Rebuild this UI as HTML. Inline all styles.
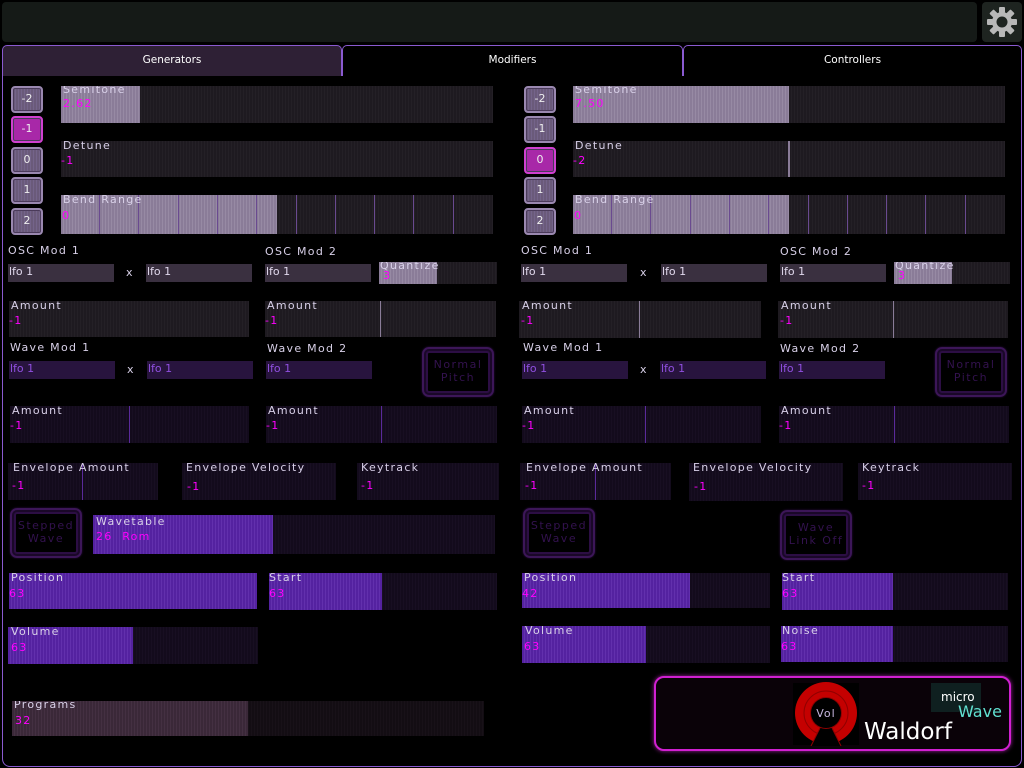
<!DOCTYPE html>
<html><head><meta charset="utf-8"><style>
*{margin:0;padding:0;box-sizing:border-box}
body{width:1024px;height:768px;background:#000;position:relative;overflow:hidden;font-family:"DejaVu Sans","Liberation Sans",sans-serif}
.a{position:absolute}
.s{position:absolute;overflow:hidden}
.s .f{position:absolute;left:0;top:0;bottom:0}
.s .l{position:absolute;left:2px;top:-2px;font-size:11px;letter-spacing:1.3px;color:#d8d0e8;white-space:nowrap}
.s .v{position:absolute;left:0;top:13px;font-size:11px;letter-spacing:1.3px;color:#f0f;white-space:nowrap}
.s .m{position:absolute;top:0;bottom:0;width:1px}
.g{background:repeating-linear-gradient(90deg,#1e1a20 0 2px,#242026 2px 3px)}
.g .f{background:repeating-linear-gradient(90deg,#8a7c98 0 2px,#978aa4 2px 3px)}
.g .m{background:#8a7c98}
.p{background:repeating-linear-gradient(90deg,#130b1c 0 2px,#180f22 2px 3px)}
.p .f{background:repeating-linear-gradient(90deg,#5422a0 0 2px,#6230ad 2px 3px)}
.p .m{background:#5a2a9a}
.r{background:repeating-linear-gradient(90deg,#130d13 0 2px,#181118 2px 3px)}
.r .f{background:repeating-linear-gradient(90deg,#3a2838 0 2px,#443042 2px 3px)}
.lab{position:absolute;font-size:11px;letter-spacing:1.3px;color:#d8d0e8;white-space:nowrap}
.cb{position:absolute;height:18px;background:#3a3040;color:#e0d8ec;font-size:11px;padding-left:1px;line-height:15px}
.cp{position:absolute;height:18px;background:#28143e;color:#9050e0;font-size:11px;padding-left:1px;line-height:15px}
.x{position:absolute;font-size:11px;color:#d8d0e8}
.b{position:absolute;width:32px;height:27px;border:2px solid #9a88b0;border-radius:4px;background:repeating-linear-gradient(90deg,#6a5a7a 0 2px,#74648a 2px 3px);color:#eee;font-size:11px;text-align:center;line-height:22px;box-shadow:inset 0 0 0 1px #4a3a5a}
.b.on{border-color:#d040d0;background:#a828a8}
.tb{position:absolute;width:72px;border:2px solid #3c1658;border-radius:7px;color:#33124f;font-size:11px;letter-spacing:1.5px;text-align:center;line-height:13px;padding-top:9px;box-shadow:inset 0 0 0 2px #1a0828,inset 0 0 0 4px #2c0e44,0 0 2px #2c0e44}
.tab{position:absolute;top:45px;height:31px;border:1px solid #8a5ad0;border-bottom:none;border-radius:5px 5px 0 0;color:#fff;font-size:10.5px;text-align:center;line-height:29px;background:#000}
</style></head><body>
<div class="a" style="left:2px;top:2px;width:975px;height:40px;background:#151a17;border-radius:4px"></div>
<div class="a" style="left:982px;top:2px;width:40px;height:40px;background:#1e2420;border-radius:4px"></div>
<svg class="a" style="left:986px;top:6px" width="32" height="32" viewBox="0 0 32 32"><g fill="#b8b8b8"><circle cx="16" cy="16" r="10"/><g id="t"><rect x="13" y="1" width="6" height="6" rx="1"/><rect x="13" y="25" width="6" height="6" rx="1"/><rect x="1" y="13" width="6" height="6" rx="1"/><rect x="25" y="13" width="6" height="6" rx="1"/></g><use href="#t" transform="rotate(45 16 16)"/></g><circle cx="16" cy="16" r="5.5" fill="#1e2420"/></svg>

<div class="a" style="left:2px;top:75px;width:1020px;height:692px;border:1px solid #8a5ad0;border-radius:0 0 8px 8px"></div>
<div class="tab" style="left:2px;width:340px;background:#2e2035">Generators</div>
<div class="tab" style="left:342px;width:341px">Modifiers</div>
<div class="tab" style="left:683px;width:339px">Controllers</div>

<!-- LEFT -->
<div class="b" style="left:11px;top:86px">-2</div>
<div class="b on" style="left:11px;top:116px">-1</div>
<div class="b" style="left:11px;top:147px">0</div>
<div class="b" style="left:11px;top:177px">1</div>
<div class="b" style="left:11px;top:208px">2</div>
<div class="s g" style="left:61px;top:86px;width:432px;height:37px"><div class="f" style="width:79px"></div><div class="l" style="top:-3px">Semitone</div><div class="v" style="top:11px;left:2px">2.62</div></div>
<div class="s g" style="left:61px;top:141px;width:432px;height:36px"><div class="l">Detune</div><div class="v">-1</div></div>
<div class="s g" style="left:61px;top:195px;width:432px;height:39px"><div class="f" style="width:216px"></div><div class="m" style="left:38px;background:#6a4a90"></div><div class="m" style="left:77px;background:#6a4a90"></div><div class="m" style="left:117px;background:#6a4a90"></div><div class="m" style="left:156px;background:#6a4a90"></div><div class="m" style="left:195px;background:#6a4a90"></div><div class="m" style="left:235px;background:#6a4a90"></div><div class="m" style="left:274px;background:#6a4a90"></div><div class="m" style="left:313px;background:#6a4a90"></div><div class="m" style="left:352px;background:#6a4a90"></div><div class="m" style="left:392px;background:#6a4a90"></div><div class="l">Bend Range</div><div class="v" style="left:1px;top:14px">0</div></div>

<div class="lab" style="left:8px;top:244px">OSC Mod 1</div>
<div class="cb" style="left:8px;top:264px;width:106px">lfo 1</div><div class="x" style="left:126px;top:266px">x</div>
<div class="cb" style="left:146px;top:264px;width:106px">lfo 1</div>
<div class="lab" style="left:265px;top:245px">OSC Mod 2</div>
<div class="cb" style="left:265px;top:264px;width:106px">lfo 1</div>
<div class="s g" style="left:379px;top:262px;width:118px;height:22px"><div class="f" style="width:58px"></div><div class="l" style="top:-3px;left:1px">Quantize</div><div class="v" style="top:7px;left:4px">3</div></div>
<div class="s g" style="left:9px;top:301px;width:240px;height:36px"><div class="l">Amount</div><div class="v">-1</div></div>
<div class="s g" style="left:265px;top:301px;width:231px;height:36px"><div class="m" style="left:115px"></div><div class="l">Amount</div><div class="v">-1</div></div>
<div class="lab" style="left:10px;top:341px">Wave Mod 1</div>
<div class="cp" style="left:9px;top:361px;width:106px">lfo 1</div><div class="x" style="left:127px;top:363px">x</div>
<div class="cp" style="left:147px;top:361px;width:106px">lfo 1</div>
<div class="lab" style="left:267px;top:342px">Wave Mod 2</div>
<div class="cp" style="left:266px;top:361px;width:106px">lfo 1</div>
<div class="tb" style="left:422px;top:347px;height:50px">Normal<br>Pitch</div>
<div class="s p" style="left:10px;top:406px;width:239px;height:37px"><div class="m" style="left:119px"></div><div class="l">Amount</div><div class="v">-1</div></div>
<div class="s p" style="left:266px;top:406px;width:231px;height:37px"><div class="m" style="left:115px"></div><div class="l">Amount</div><div class="v">-1</div></div>
<div class="s p" style="left:8px;top:463px;width:150px;height:37px"><div class="m" style="left:74px"></div><div class="l" style="left:5px">Envelope Amount</div><div class="v" style="left:4px;top:16px">-1</div></div>
<div class="s p" style="left:182px;top:463px;width:154px;height:37px"><div class="l" style="left:4px">Envelope Velocity</div><div class="v" style="left:5px;top:17px">-1</div></div>
<div class="s p" style="left:357px;top:463px;width:142px;height:37px"><div class="l" style="left:4px">Keytrack</div><div class="v" style="left:4px;top:16px">-1</div></div>
<div class="tb" style="left:10px;top:508px;height:50px">Stepped<br>Wave</div>
<div class="s p" style="left:93px;top:515px;width:402px;height:39px"><div class="f" style="width:180px"></div><div class="l" style="left:3px;top:0">Wavetable</div><div class="v" style="left:3px;top:15px">26&nbsp; Rom</div></div>
<div class="s p" style="left:9px;top:573px;width:248px;height:36px"><div class="f" style="width:248px"></div><div class="l">Position</div><div class="v" style="top:14px">63</div></div>
<div class="s p" style="left:269px;top:573px;width:228px;height:37px"><div class="f" style="width:113px"></div><div class="l" style="left:0">Start</div><div class="v" style="top:14px">63</div></div>
<div class="s p" style="left:8px;top:627px;width:250px;height:37px"><div class="f" style="width:125px"></div><div class="l" style="left:3px">Volume</div><div class="v" style="left:3px;top:14px">63</div></div>
<div class="s r" style="left:12px;top:701px;width:472px;height:35px"><div class="f" style="width:236px"></div><div class="l" style="left:2px;top:-3px">Programs</div><div class="v" style="left:3px;top:13px">32</div></div>

<!-- RIGHT -->
<div class="b" style="left:524px;top:86px">-2</div>
<div class="b" style="left:524px;top:116px">-1</div>
<div class="b on" style="left:524px;top:147px">0</div>
<div class="b" style="left:524px;top:177px">1</div>
<div class="b" style="left:524px;top:208px">2</div>
<div class="s g" style="left:573px;top:86px;width:432px;height:37px"><div class="f" style="width:216px"></div><div class="l" style="top:-3px">Semitone</div><div class="v" style="top:11px;left:2px">7.50</div></div>
<div class="s g" style="left:573px;top:141px;width:432px;height:36px"><div class="m" style="left:215px;width:2px;background:#8a7c98"></div><div class="l">Detune</div><div class="v">-2</div></div>
<div class="s g" style="left:573px;top:195px;width:432px;height:39px"><div class="f" style="width:216px"></div><div class="m" style="left:38px;background:#6a4a90"></div><div class="m" style="left:77px;background:#6a4a90"></div><div class="m" style="left:117px;background:#6a4a90"></div><div class="m" style="left:156px;background:#6a4a90"></div><div class="m" style="left:195px;background:#6a4a90"></div><div class="m" style="left:235px;background:#6a4a90"></div><div class="m" style="left:274px;background:#6a4a90"></div><div class="m" style="left:313px;background:#6a4a90"></div><div class="m" style="left:352px;background:#6a4a90"></div><div class="m" style="left:392px;background:#6a4a90"></div><div class="l">Bend Range</div><div class="v" style="left:1px;top:14px">0</div></div>

<div class="lab" style="left:521px;top:244px">OSC Mod 1</div>
<div class="cb" style="left:521px;top:264px;width:106px">lfo 1</div><div class="x" style="left:640px;top:266px">x</div>
<div class="cb" style="left:661px;top:264px;width:106px">lfo 1</div>
<div class="lab" style="left:780px;top:245px">OSC Mod 2</div>
<div class="cb" style="left:780px;top:264px;width:106px">lfo 1</div>
<div class="s g" style="left:894px;top:262px;width:116px;height:22px"><div class="f" style="width:58px"></div><div class="l" style="top:-3px;left:1px">Quantize</div><div class="v" style="top:7px;left:4px">3</div></div>
<div class="s g" style="left:519px;top:301px;width:242px;height:37px"><div class="m" style="left:120px"></div><div class="l" style="left:3px">Amount</div><div class="v" style="left:2px">-1</div></div>
<div class="s g" style="left:778px;top:301px;width:230px;height:37px"><div class="m" style="left:115px"></div><div class="l" style="left:3px">Amount</div><div class="v" style="left:2px">-1</div></div>
<div class="lab" style="left:523px;top:341px">Wave Mod 1</div>
<div class="cp" style="left:522px;top:361px;width:106px">lfo 1</div><div class="x" style="left:640px;top:363px">x</div>
<div class="cp" style="left:660px;top:361px;width:106px">lfo 1</div>
<div class="lab" style="left:780px;top:342px">Wave Mod 2</div>
<div class="cp" style="left:779px;top:361px;width:106px">lfo 1</div>
<div class="tb" style="left:935px;top:347px;height:50px">Normal<br>Pitch</div>
<div class="s p" style="left:522px;top:406px;width:239px;height:37px"><div class="m" style="left:123px"></div><div class="l" style="left:2px">Amount</div><div class="v">-1</div></div>
<div class="s p" style="left:779px;top:406px;width:230px;height:37px"><div class="m" style="left:115px"></div><div class="l" style="left:2px">Amount</div><div class="v">-1</div></div>
<div class="s p" style="left:520px;top:463px;width:151px;height:37px"><div class="m" style="left:75px"></div><div class="l" style="left:6px">Envelope Amount</div><div class="v" style="left:5px;top:16px">-1</div></div>
<div class="s p" style="left:689px;top:463px;width:154px;height:38px"><div class="l" style="left:4px">Envelope Velocity</div><div class="v" style="left:5px;top:17px">-1</div></div>
<div class="s p" style="left:858px;top:463px;width:154px;height:37px"><div class="l" style="left:4px">Keytrack</div><div class="v" style="left:4px;top:16px">-1</div></div>
<div class="tb" style="left:523px;top:508px;height:50px">Stepped<br>Wave</div>
<div class="tb" style="left:780px;top:510px;height:50px">Wave<br>Link Off</div>
<div class="s p" style="left:522px;top:573px;width:248px;height:35px"><div class="f" style="width:168px"></div><div class="l" style="left:2px">Position</div><div class="v" style="top:14px">42</div></div>
<div class="s p" style="left:782px;top:573px;width:226px;height:37px"><div class="f" style="width:111px"></div><div class="l" style="left:0">Start</div><div class="v" style="top:14px">63</div></div>
<div class="s p" style="left:522px;top:626px;width:248px;height:37px"><div class="f" style="width:124px"></div><div class="l" style="left:3px">Volume</div><div class="v" style="left:2px;top:14px">63</div></div>
<div class="s p" style="left:781px;top:626px;width:227px;height:36px"><div class="f" style="width:112px"></div><div class="l" style="left:1px">Noise</div><div class="v" style="top:14px">63</div></div>

<!-- logo box -->
<div class="a" style="left:654px;top:676px;width:357px;height:75px;border:2px solid #d020d0;border-radius:10px;background:#0a0208;box-shadow:0 0 4px #a020a0"></div>
<div class="a" style="left:793px;top:683px;width:66px;height:62px;background:#000"></div>
<svg class="a" style="left:793px;top:682px" width="66" height="64" viewBox="0 0 66 64"><circle cx="33" cy="31" r="31" fill="#c40000"/><circle cx="33" cy="31" r="22" fill="none" stroke="#900000" stroke-width="1"/><polygon points="18,64 27,46 39,46 48,64" fill="#000"/><path d="M27 46 L18 64 M39 46 L48 64" stroke="#900000" stroke-width="1"/><circle cx="33" cy="31" r="16" fill="#900000"/><circle cx="33" cy="31" r="15" fill="#000"/><text x="33" y="35" font-size="11" fill="#c8b8e0" text-anchor="middle" font-family="DejaVu Sans" letter-spacing="1">Vol</text></svg>
<div class="a" style="left:864px;top:718px;font-size:23px;color:#fff;line-height:28px">Waldorf</div>
<div class="a" style="left:931px;top:683px;width:50px;height:29px;background:#0f2020"></div>
<div class="a" style="left:941px;top:690px;font-size:12px;color:#fff">micro</div>
<div class="a" style="left:958px;top:702px;font-size:16px;color:#60e0d0">Wave</div>
</body></html>
